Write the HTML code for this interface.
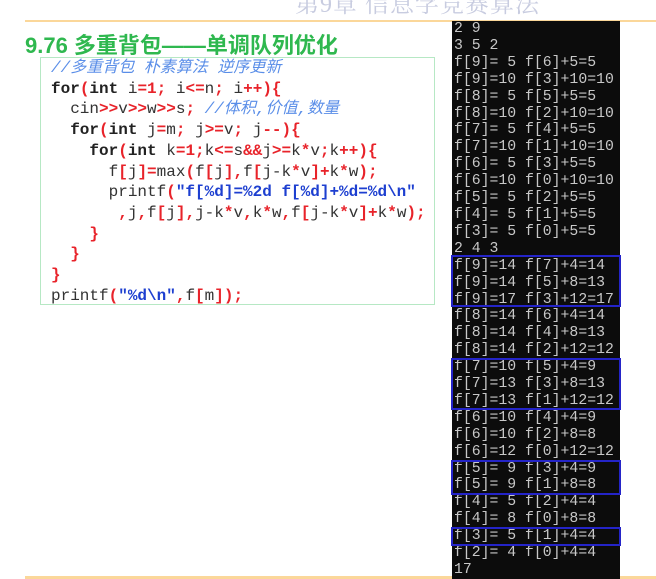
<!DOCTYPE html>
<html><head><meta charset="utf-8"><style>
body{margin:0;width:656px;height:579px;background:#fff;position:relative;overflow:hidden;font-family:"Liberation Sans","Noto Sans CJK SC",sans-serif}
.hdr{position:absolute;left:295px;top:-16px;font:24px "Liberation Serif","Noto Serif CJK SC",serif;color:#c8cce0;letter-spacing:1px}
.ol{position:absolute;left:25px;right:0;height:2px;background:#fbd79a}
.title{position:absolute;left:25px;top:28px;font-size:22px;font-weight:bold;color:#2fb84f}
.box{position:absolute;left:40px;top:57px;width:393px;height:246px;border:1px solid #b6e8c4}
pre{position:absolute;left:51px;top:58px;margin:0;font:bold 16px/20.7px "Liberation Mono","Noto Sans CJK SC",monospace;color:#222}
.r{color:#e8232a}.b{color:#1d3fd0}.c{color:#5a8ee8;font-style:italic;font-weight:normal}.n{font-weight:normal;color:#333}
.con{position:absolute;left:452px;top:21px;width:168px;height:558px;background:#0c0c0c}
.con pre{position:absolute;left:2px;top:0;font:normal 14.8px/16.9px "Liberation Mono","Noto Sans CJK SC",monospace;color:#c8c8c8}
.bx{position:absolute;left:451px;width:170px;border:2px solid #2424c8;box-sizing:border-box}
</style></head><body>
<div class="hdr">第9章 信息学竞赛算法</div>
<div class="ol" style="top:20px"></div>
<div class="ol" style="top:576px;height:3px"></div>
<div class="title">9.76 多重背包——单调队列优化</div>
<div class="box"></div>
<pre><span class="c">//多重背包 朴素算法 逆序更新</span>
for<span class="r">(</span>int <span class="n">i</span><span class="r">=1;</span> <span class="n">i</span><span class="r">&lt;=</span><span class="n">n</span><span class="r">;</span> <span class="n">i</span><span class="r">++){</span>
  <span class="n">cin</span><span class="r">&gt;&gt;</span><span class="n">v</span><span class="r">&gt;&gt;</span><span class="n">w</span><span class="r">&gt;&gt;</span><span class="n">s</span><span class="r">;</span> <span class="c">//体积,价值,数量</span>
  for<span class="r">(</span>int <span class="n">j</span><span class="r">=</span><span class="n">m</span><span class="r">;</span> <span class="n">j</span><span class="r">&gt;=</span><span class="n">v</span><span class="r">;</span> <span class="n">j</span><span class="r">--){</span>
    for<span class="r">(</span>int <span class="n">k</span><span class="r">=1;</span><span class="n">k</span><span class="r">&lt;=</span><span class="n">s</span><span class="r">&amp;&amp;</span><span class="n">j</span><span class="r">&gt;=</span><span class="n">k</span><span class="r">*</span><span class="n">v</span><span class="r">;</span><span class="n">k</span><span class="r">++){</span>
      <span class="n">f</span><span class="r">[</span><span class="n">j</span><span class="r">]=</span><span class="n">max</span><span class="r">(</span><span class="n">f</span><span class="r">[</span><span class="n">j</span><span class="r">],</span><span class="n">f</span><span class="r">[</span><span class="n">j-k</span><span class="r">*</span><span class="n">v</span><span class="r">]+</span><span class="n">k</span><span class="r">*</span><span class="n">w</span><span class="r">);</span>
      <span class="n">printf</span><span class="r">(</span><span class="b">"f[%d]=%2d f[%d]+%d=%d\n"</span>
       <span class="r">,</span><span class="n">j</span><span class="r">,</span><span class="n">f</span><span class="r">[</span><span class="n">j</span><span class="r">],</span><span class="n">j-k</span><span class="r">*</span><span class="n">v</span><span class="r">,</span><span class="n">k</span><span class="r">*</span><span class="n">w</span><span class="r">,</span><span class="n">f</span><span class="r">[</span><span class="n">j-k</span><span class="r">*</span><span class="n">v</span><span class="r">]+</span><span class="n">k</span><span class="r">*</span><span class="n">w</span><span class="r">);</span>
    <span class="r">}</span>
  <span class="r">}</span>
<span class="r">}</span>
<span class="n">printf</span><span class="r">(</span><span class="b">"%d\n"</span><span class="r">,</span><span class="n">f</span><span class="r">[</span><span class="n">m</span><span class="r">]);</span></pre>
<div class="con"><pre>2 9
3 5 2
f[9]= 5 f[6]+5=5
f[9]=10 f[3]+10=10
f[8]= 5 f[5]+5=5
f[8]=10 f[2]+10=10
f[7]= 5 f[4]+5=5
f[7]=10 f[1]+10=10
f[6]= 5 f[3]+5=5
f[6]=10 f[0]+10=10
f[5]= 5 f[2]+5=5
f[4]= 5 f[1]+5=5
f[3]= 5 f[0]+5=5
2 4 3
f[9]=14 f[7]+4=14
f[9]=14 f[5]+8=13
f[9]=17 f[3]+12=17
f[8]=14 f[6]+4=14
f[8]=14 f[4]+8=13
f[8]=14 f[2]+12=12
f[7]=10 f[5]+4=9
f[7]=13 f[3]+8=13
f[7]=13 f[1]+12=12
f[6]=10 f[4]+4=9
f[6]=10 f[2]+8=8
f[6]=12 f[0]+12=12
f[5]= 9 f[3]+4=9
f[5]= 9 f[1]+8=8
f[4]= 5 f[2]+4=4
f[4]= 8 f[0]+8=8
f[3]= 5 f[1]+4=4
f[2]= 4 f[0]+4=4
17</pre></div>
<div class="bx" style="top:255px;height:52px"></div>
<div class="bx" style="top:358px;height:52px"></div>
<div class="bx" style="top:460px;height:35px"></div>
<div class="bx" style="top:527px;height:19px"></div>
</body></html>
